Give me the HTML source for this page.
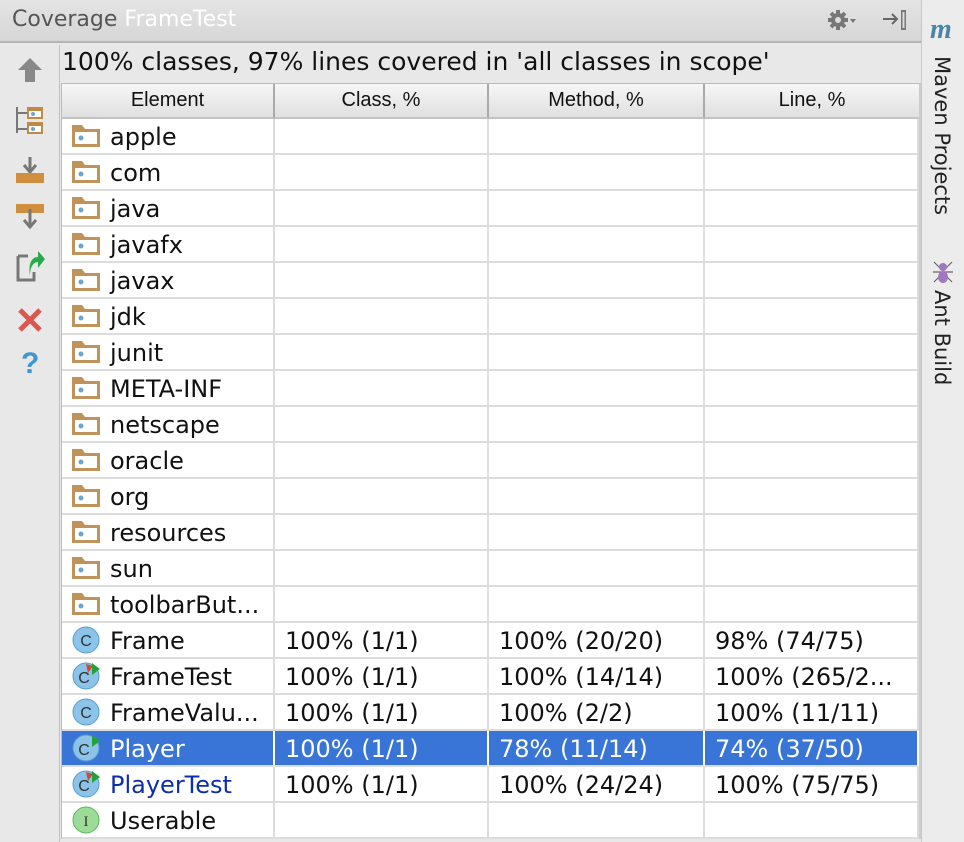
<!DOCTYPE html>
<html><head><meta charset="utf-8"><style>
*{margin:0;padding:0;box-sizing:border-box}
body{width:964px;height:842px;background:#e8e8e8;position:relative;overflow:hidden;font-family:"DejaVu Sans","Liberation Sans",sans-serif;}
.title{position:absolute;left:0;top:0;width:921px;height:43px;background:linear-gradient(#e4e4e4,#d6d6d6);border-bottom:2px solid #b4b4b4;}
.title span{position:absolute;left:12px;top:7px;font-size:22px;color:#555;}
.title b{font-weight:normal;color:#fff}
.stripe{position:absolute;left:921px;top:0;width:43px;height:842px;background:#ececec;border-left:1px solid #c8c8c8}
.vt{position:absolute;writing-mode:vertical-rl;font-size:21px;color:#222;font-family:"DejaVu Sans",sans-serif}
.left{position:absolute;left:0;top:45px;width:60px;height:797px;background:#e8e8e8;border-right:1px solid #c0c0c0}
.head{position:absolute;left:62px;top:47px;font-size:25px;color:#111;white-space:nowrap}
table{position:absolute;left:61px;top:83px;border-collapse:separate;border-spacing:0;table-layout:fixed;background:#fff;border-left:1px solid #bbb;border-top:1px solid #bbb;border-right:2px solid #ccc}
th{height:35px;font-family:"Liberation Sans",sans-serif;font-weight:normal;font-size:20px;color:#111;background:linear-gradient(#f6f6f6,#e0e0e0);border-right:2px solid #aaa;border-bottom:2px solid #c4c4c4;text-align:center}
td{height:36px;border-right:2px solid #dcdcdc;border-bottom:2px solid #dcdcdc;font-size:24px;color:#111;white-space:nowrap;overflow:hidden;padding-left:10px;padding-top:2px;vertical-align:middle;line-height:32px}
td.n{padding-left:10px}
td .ic{display:inline-block;vertical-align:middle;margin-right:10px;line-height:0;position:relative;top:-2px}
td .ic svg{display:block}
tr.sel td{background:#3875d7;color:#fff;border-right-color:#fff}
.blue{color:#0b2faa}
</style></head><body>
<div class="title"><span>Coverage <b>FrameTest</b></span>
<svg style="position:absolute;left:826px;top:8px" width="30" height="24"><g fill="#777"><circle cx="12" cy="12" r="7"/><g stroke="#777" stroke-width="4"><line x1="12" y1="2" x2="12" y2="22"/><line x1="2" y1="12" x2="22" y2="12"/><line x1="5" y1="5" x2="19" y2="19"/><line x1="19" y1="5" x2="5" y2="19"/></g><circle cx="12" cy="12" r="3" fill="#ddd"/><path d="M24 11h6l-3 4z"/></g></svg>
<svg style="position:absolute;left:882px;top:8px" width="28" height="24"><g stroke="#666" stroke-width="2" fill="none"><line x1="1" y1="11" x2="14" y2="11"/><path d="M10 6l5 5-5 5"/></g><rect x="19" y="2" width="5" height="20" fill="#777"/><rect x="20.5" y="4" width="2" height="16" fill="#ddd"/></svg>
</div>
<div class="left">
<svg style="position:absolute;left:17px;top:12px" width="26" height="26"><path d="M13 1L25 13h-7v12h-10V13H1z" fill="#888"/></svg>
<svg style="position:absolute;left:15px;top:60px" width="30" height="30"><g stroke="#777" stroke-width="2" fill="none"><path d="M2 2v26M2 8h10M2 24h10"/></g><rect x="12" y="2" width="16" height="12" fill="#c08a45"/><rect x="14" y="6" width="12" height="6" fill="#fff"/><circle cx="18" cy="9" r="2" fill="#6aa6d0"/><rect x="12" y="17" width="16" height="12" fill="#c08a45"/><rect x="14" y="21" width="12" height="6" fill="#fff"/><circle cx="18" cy="24" r="2" fill="#6aa6d0"/></svg>
<svg style="position:absolute;left:15px;top:110px" width="30" height="30"><path d="M15 2v14M9 10l6 7 6-7" stroke="#777" stroke-width="3" fill="none"/><rect x="1" y="18" width="28" height="10" fill="#cf8f3e"/></svg>
<svg style="position:absolute;left:15px;top:150px" width="30" height="40"><rect x="1" y="9" width="28" height="9" fill="#cf8f3e"/><path d="M15 14v17M9 25l6 7 6-7" stroke="#777" stroke-width="3" fill="none"/></svg>
<svg style="position:absolute;left:16px;top:205px" width="30" height="32"><path d="M2 6h10M2 6v24h16v-8" stroke="#777" stroke-width="3" fill="none"/><path d="M14 26c0-10 4-14 8-14v6l7-9-7-8v6c-6 0-10 6-8 19z" fill="#2aa84a"/></svg>
<svg style="position:absolute;left:17px;top:262px" width="26" height="26"><path d="M3 3l20 20M23 3L3 23" stroke="#d9574e" stroke-width="5"/></svg>
<div style="position:absolute;left:21px;top:302px;font-size:30px;font-weight:bold;color:#3d96cf;font-family:'Liberation Sans',sans-serif">?</div>
</div>
<div class="head">100% classes, 97% lines covered in 'all classes in scope'</div>
<table>
<colgroup><col style="width:213px"><col style="width:214px"><col style="width:216px"><col style="width:214px"></colgroup>
<tr><th>Element</th><th>Class, %</th><th>Method, %</th><th style="border-right:none">Line, %</th></tr>
<tr><td><span class="ic"><svg width="28" height="22"><path d="M0 0h10l3 4h15v18H0z" fill="#c0935a"/><rect x="3" y="7" width="22" height="12" fill="#fff"/><circle cx="9" cy="13" r="2.5" fill="#6aa6d0"/></svg></span>apple</td><td></td><td></td><td></td></tr>
<tr><td><span class="ic"><svg width="28" height="22"><path d="M0 0h10l3 4h15v18H0z" fill="#c0935a"/><rect x="3" y="7" width="22" height="12" fill="#fff"/><circle cx="9" cy="13" r="2.5" fill="#6aa6d0"/></svg></span>com</td><td></td><td></td><td></td></tr>
<tr><td><span class="ic"><svg width="28" height="22"><path d="M0 0h10l3 4h15v18H0z" fill="#c0935a"/><rect x="3" y="7" width="22" height="12" fill="#fff"/><circle cx="9" cy="13" r="2.5" fill="#6aa6d0"/></svg></span>java</td><td></td><td></td><td></td></tr>
<tr><td><span class="ic"><svg width="28" height="22"><path d="M0 0h10l3 4h15v18H0z" fill="#c0935a"/><rect x="3" y="7" width="22" height="12" fill="#fff"/><circle cx="9" cy="13" r="2.5" fill="#6aa6d0"/></svg></span>javafx</td><td></td><td></td><td></td></tr>
<tr><td><span class="ic"><svg width="28" height="22"><path d="M0 0h10l3 4h15v18H0z" fill="#c0935a"/><rect x="3" y="7" width="22" height="12" fill="#fff"/><circle cx="9" cy="13" r="2.5" fill="#6aa6d0"/></svg></span>javax</td><td></td><td></td><td></td></tr>
<tr><td><span class="ic"><svg width="28" height="22"><path d="M0 0h10l3 4h15v18H0z" fill="#c0935a"/><rect x="3" y="7" width="22" height="12" fill="#fff"/><circle cx="9" cy="13" r="2.5" fill="#6aa6d0"/></svg></span>jdk</td><td></td><td></td><td></td></tr>
<tr><td><span class="ic"><svg width="28" height="22"><path d="M0 0h10l3 4h15v18H0z" fill="#c0935a"/><rect x="3" y="7" width="22" height="12" fill="#fff"/><circle cx="9" cy="13" r="2.5" fill="#6aa6d0"/></svg></span>junit</td><td></td><td></td><td></td></tr>
<tr><td><span class="ic"><svg width="28" height="22"><path d="M0 0h10l3 4h15v18H0z" fill="#c0935a"/><rect x="3" y="7" width="22" height="12" fill="#fff"/><circle cx="9" cy="13" r="2.5" fill="#6aa6d0"/></svg></span>META-INF</td><td></td><td></td><td></td></tr>
<tr><td><span class="ic"><svg width="28" height="22"><path d="M0 0h10l3 4h15v18H0z" fill="#c0935a"/><rect x="3" y="7" width="22" height="12" fill="#fff"/><circle cx="9" cy="13" r="2.5" fill="#6aa6d0"/></svg></span>netscape</td><td></td><td></td><td></td></tr>
<tr><td><span class="ic"><svg width="28" height="22"><path d="M0 0h10l3 4h15v18H0z" fill="#c0935a"/><rect x="3" y="7" width="22" height="12" fill="#fff"/><circle cx="9" cy="13" r="2.5" fill="#6aa6d0"/></svg></span>oracle</td><td></td><td></td><td></td></tr>
<tr><td><span class="ic"><svg width="28" height="22"><path d="M0 0h10l3 4h15v18H0z" fill="#c0935a"/><rect x="3" y="7" width="22" height="12" fill="#fff"/><circle cx="9" cy="13" r="2.5" fill="#6aa6d0"/></svg></span>org</td><td></td><td></td><td></td></tr>
<tr><td><span class="ic"><svg width="28" height="22"><path d="M0 0h10l3 4h15v18H0z" fill="#c0935a"/><rect x="3" y="7" width="22" height="12" fill="#fff"/><circle cx="9" cy="13" r="2.5" fill="#6aa6d0"/></svg></span>resources</td><td></td><td></td><td></td></tr>
<tr><td><span class="ic"><svg width="28" height="22"><path d="M0 0h10l3 4h15v18H0z" fill="#c0935a"/><rect x="3" y="7" width="22" height="12" fill="#fff"/><circle cx="9" cy="13" r="2.5" fill="#6aa6d0"/></svg></span>sun</td><td></td><td></td><td></td></tr>
<tr><td><span class="ic"><svg width="28" height="22"><path d="M0 0h10l3 4h15v18H0z" fill="#c0935a"/><rect x="3" y="7" width="22" height="12" fill="#fff"/><circle cx="9" cy="13" r="2.5" fill="#6aa6d0"/></svg></span>toolbarBut...</td><td></td><td></td><td></td></tr>
<tr><td><span class="ic"><svg width="28" height="28"><circle cx="14" cy="14" r="13" fill="#8cc3e8" stroke="#5a9ccc"/><text x="14" y="20" font-size="16" text-anchor="middle" fill="#333" font-family="Liberation Sans">C</text></svg></span>Frame</td><td class="n">100% (1/1)</td><td class="n">100% (20/20)</td><td class="n">98% (74/75)</td></tr>
<tr><td><span class="ic"><svg width="28" height="28"><circle cx="14" cy="14" r="13" fill="#8cc3e8" stroke="#5a9ccc"/><text x="12" y="21" font-size="16" text-anchor="middle" fill="#333" font-family="Liberation Sans">C</text><path d="M14 2l7 2-5 7z" fill="#d04a3a"/><path d="M20 1l8 6-8 6z" fill="#22a33a"/></svg></span>FrameTest</td><td class="n">100% (1/1)</td><td class="n">100% (14/14)</td><td class="n">100% (265/2...</td></tr>
<tr><td><span class="ic"><svg width="28" height="28"><circle cx="14" cy="14" r="13" fill="#8cc3e8" stroke="#5a9ccc"/><text x="14" y="20" font-size="16" text-anchor="middle" fill="#333" font-family="Liberation Sans">C</text></svg></span>FrameValu...</td><td class="n">100% (1/1)</td><td class="n">100% (2/2)</td><td class="n">100% (11/11)</td></tr>
<tr class="sel"><td><span class="ic"><svg width="28" height="28"><circle cx="14" cy="14" r="13" fill="#8cc3e8" stroke="#5a9ccc"/><text x="12" y="21" font-size="16" text-anchor="middle" fill="#333" font-family="Liberation Sans">C</text><path d="M20 1l8 6-8 6z" fill="#22a33a"/></svg></span>Player</td><td class="n">100% (1/1)</td><td class="n">78% (11/14)</td><td class="n">74% (37/50)</td></tr>
<tr><td class="blue"><span class="ic"><svg width="28" height="28"><circle cx="14" cy="14" r="13" fill="#8cc3e8" stroke="#5a9ccc"/><text x="12" y="21" font-size="16" text-anchor="middle" fill="#333" font-family="Liberation Sans">C</text><path d="M14 2l7 2-5 7z" fill="#d04a3a"/><path d="M20 1l8 6-8 6z" fill="#22a33a"/></svg></span>PlayerTest</td><td class="n">100% (1/1)</td><td class="n">100% (24/24)</td><td class="n">100% (75/75)</td></tr>
<tr><td><span class="ic"><svg width="28" height="28"><circle cx="14" cy="14" r="13" fill="#9ddc98" stroke="#5cb85c"/><text x="14" y="20" font-size="15" text-anchor="middle" fill="#333" font-family="Liberation Serif">I</text></svg></span>Userable</td><td></td><td></td><td></td></tr>
</table>
<div class="stripe">
<div style="position:absolute;left:8px;top:14px;font-size:28px;font-weight:bold;font-style:italic;color:#4a85a8;font-family:'Liberation Serif',serif">m</div>
<div class="vt" style="left:8px;top:56px">Maven Projects</div>
<svg style="position:absolute;left:9px;top:258px" width="24" height="28"><g stroke="#666" stroke-width="1.2"><path d="M3 4l6 6M21 4l-6 6M2 14h20M3 24l6-6M21 24l-6-6"/></g><ellipse cx="12" cy="9" rx="4" ry="4" fill="#a077c0"/><ellipse cx="12" cy="19" rx="5" ry="6" fill="#a077c0"/></svg>
<div class="vt" style="left:8px;top:290px">Ant Build</div>
</div>
</body></html>
